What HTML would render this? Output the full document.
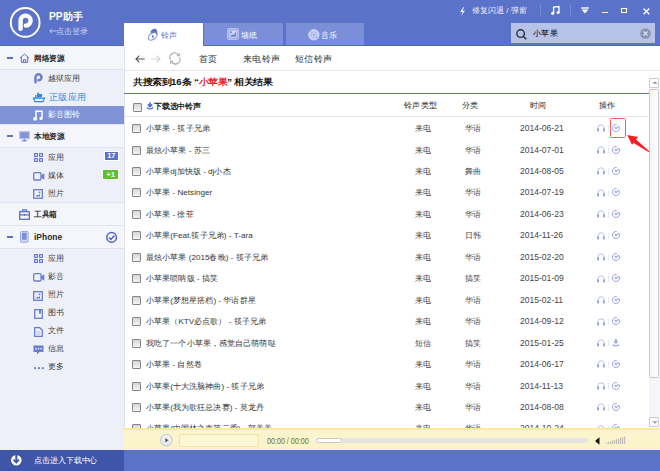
<!DOCTYPE html>
<html><head><meta charset="utf-8">
<style>
*{margin:0;padding:0;box-sizing:border-box}
html,body{width:660px;height:471px;overflow:hidden;background:#fff}
body{position:relative;font-family:"Liberation Sans",sans-serif;font-size:8px;color:#333}
.abs{position:absolute;white-space:nowrap}
svg{position:absolute;overflow:visible}
#hdr{left:0;top:0;width:660px;height:46px;background:#5a72c8}
#ppname{left:49px;top:10.5px;color:#fff;font-weight:bold;font-size:10.2px;line-height:12px}
#login{left:49px;top:25.5px;color:#c9d2f0;font-size:8px;line-height:11px}
.tab{position:absolute;top:23px;height:22px;width:79px;background:#7a8fd8;color:#fff;line-height:23px}
.tab.act{background:#fff;color:#5a72c8;height:23px}
.tab span{position:absolute;top:0.8px;font-size:8px}
#search{left:511px;top:23px;width:144px;height:20px;background:#b6c2e8}
#side{left:0;top:46px;width:124px;height:404px;background:#eef0f9}
.sec{position:absolute;left:0;width:124px;background:#f5f6fc;font-weight:bold;color:#2b2b2b;font-size:8px;border-bottom:1px solid #dfe3ef}
.sec .t{position:absolute;left:33.7px;top:0.8px;transform:scaleX(.96);transform-origin:0 0}
.item{position:absolute;left:0;width:124px;height:18px;line-height:18px;color:#3f3f3f}
.item .t{position:absolute;left:48px;top:0}
.badge{position:absolute;left:104px;width:14px;height:7.5px;top:5.5px;color:#fff;font-size:7.5px;line-height:8px;text-align:center;font-weight:bold}
.nav{top:53.5px;color:#333;font-size:10px;line-height:12px;transform:scale(.93);transform-origin:0 0}
#title{left:133px;top:77px;font-weight:bold;font-size:10px;line-height:12px;color:#111;transform:scale(.95,.86);transform-origin:0 0}
.ql{display:inline-block;width:8px;text-align:right}.qr{display:inline-block;width:7.5px;text-align:left}
.hd{top:100.4px;color:#1e1e1e;line-height:12px;font-size:9px;transform:scale(.93);transform-origin:0 0}
.row{position:absolute;left:124px;width:524px;height:21.5px}
.row span{position:absolute;top:6px;line-height:12px;white-space:nowrap;font-size:9px;transform:scale(.9);transform-origin:0 0}
.row span.c4{font-size:9.5px}
.cb{position:absolute;left:8.3px;width:9px;height:9px;border:1px solid #858585;border-radius:1px;background:linear-gradient(#d6d6d6,#f4f4f4)}
.row .cb{top:7px}
.c1{left:22px;color:#363636}
.c2{left:290.5px;color:#444}
.c3{left:340.5px;color:#444}
.c4{left:396px;color:#444}
.row svg.ic1{left:472.7px;top:7.4px}
.row svg.ic2{left:488px;top:7px}
.row i.sep{position:absolute;left:483.8px;top:8.2px;width:1px;height:6.6px;background:#e6eaf5}
#player{left:124px;top:428px;width:536px;height:22px;background:linear-gradient(#fbf5cf,#fbf4c9);border-top:2px solid #f7ec9e}
#foot{left:0;top:450px;width:660px;height:21px;background:#5a72c8}
#footl{left:0;top:450px;width:124px;height:21px;background:#3f55a8}
</style></head><body>
<div id="hdr" class="abs"></div>
<div class="abs" style="left:0;top:45px;width:660px;height:1px;background:#4f67c2"></div>
<!-- logo -->
<svg style="left:0;top:0" width="60" height="46" viewBox="0 0 60 46">
<circle cx="25.2" cy="22.4" r="14.4" fill="none" stroke="#fff" stroke-width="1.9"/>
<path d="M20.6 28.7V20.6A5 5 0 1 1 25.8 25.6" fill="none" stroke="#fff" stroke-width="4.4" stroke-linecap="round"/>
</svg>
<div id="ppname" class="abs">PP助手</div>
<svg style="left:49px;top:28px" width="8" height="6" viewBox="0 0 8 6"><path d="M7.5 3H.8M3 .8L.8 3 3 5.2" fill="none" stroke="#c9d2f0" stroke-width=".9"/></svg>
<div id="login" class="abs" style="left:56px">点击登录</div>

<div class="tab act" style="left:124px"><span style="left:37px">铃声</span></div>
<svg style="left:146px;top:28px" width="12" height="13" viewBox="0 0 12 13">
<path d="M4.3 4.6C4.8 2.6 5.8 1.2 7.6.9c1.8-.3 3 .3 3.4 1.6l.6 4.3z" fill="#5a72c8"/>
<ellipse cx="6.6" cy="8.4" rx="4.9" ry="3" transform="rotate(-35 6.6 8.4)" fill="#fff" stroke="#6a80cf" stroke-width="1"/>
<path d="M5.6 8.3l1.4-1.4 1 2-1.3 1.2z" fill="#5a72c8"/>
</svg>
<div class="tab" style="left:204.4px;width:78.6px"><span style="left:36.6px">墙纸</span></div>
<svg style="left:227.4px;top:28px" width="12" height="12" viewBox="0 0 12 12">
<rect x="0.5" y="0.5" width="11" height="11" rx="1" fill="#a2b0e8" stroke="#b6c1ee" stroke-width="1"/>
<rect x="2.3" y="2.3" width="7.4" height="7.4" fill="#ccd3f4"/>
<path d="M3 8.8l2.2-2.6 1.3 1.1 2.5-3.6v5.1z" fill="#6f84d4"/><circle cx="4" cy="4.3" r="1" fill="#6f84d4"/>
</svg>
<div class="tab" style="left:286px;width:78px"><span style="left:35.3px">音乐</span></div>
<svg style="left:307.8px;top:28.6px" width="12" height="12" viewBox="0 0 12 12">
<circle cx="5.8" cy="5.8" r="5.7" fill="#c9d1f4"/>
<circle cx="5.8" cy="5.8" r="2.8" fill="none" stroke="#a9b7ea" stroke-width="1"/>
<circle cx="5.8" cy="5.8" r="1" fill="#8196dc"/><circle cx="2.6" cy="2.7" r=".7" fill="#8196dc"/><circle cx="8.7" cy="8.6" r=".7" fill="#8196dc"/>
</svg>

<!-- header right -->
<svg style="left:459px;top:7px" width="7" height="9" viewBox="0 0 7 9">
<path d="M4.5 0L1 5h2.5L2 9l4-5.2H3.6L5.2 0z" fill="#e8ecfa"/>
</svg>
<div class="abs" style="left:472px;top:4.5px;color:#e8ecfa;line-height:12px">修复闪退 / 弹窗</div>
<div class="abs" style="left:539.8px;top:4.2px;width:1px;height:12.5px;background:#7388d2"></div>
<svg style="left:550.5px;top:6.2px" width="9" height="9" viewBox="0 0 9 9">
<path d="M2.6 7.3V1.2L8 .6v6" fill="none" stroke="#fff" stroke-width="1.3"/>
<circle cx="1.7" cy="7.3" r="1.6" fill="#fff"/><circle cx="7.1" cy="6.6" r="1.5" fill="#fff"/>
</svg>
<div class="abs" style="left:569.8px;top:4.2px;width:1px;height:12.5px;background:#7388d2"></div>
<svg style="left:581px;top:6.5px" width="8" height="7" viewBox="0 0 8 7">
<rect x="0.2" y="0.3" width="7.6" height="1.4" fill="#fff"/>
<path d="M0.6 2.6h6.8L4 6.6z" fill="#fff"/>
</svg>
<div class="abs" style="left:601.5px;top:11.6px;width:6.5px;height:1.5px;background:#fff"></div>
<div class="abs" style="left:621px;top:8.2px;width:6.3px;height:5px;border:1.6px solid #fff"></div>
<svg style="left:642.7px;top:7.6px" width="7" height="7" viewBox="0 0 7 7">
<path d="M0.5 0.5l5.8 5.8M6.3 0.5L.5 6.3" stroke="#fff" stroke-width="1.3"/>
</svg>
<div id="search" class="abs"></div>
<svg style="left:515.5px;top:28.5px" width="11" height="11" viewBox="0 0 11 11">
<circle cx="4.6" cy="4.6" r="3.8" fill="none" stroke="#2b2f3c" stroke-width="1.4"/>
<path d="M7.3 7.3l3 3" stroke="#2b2f3c" stroke-width="1.5"/>
</svg>
<div class="abs" style="left:532.8px;top:28.3px;color:#000;line-height:12px;font-size:9px;transform:scale(.92);transform-origin:0 0">小苹果</div>
<svg style="left:640px;top:28px" width="11" height="11" viewBox="0 0 11 11">
<circle cx="5.5" cy="5.5" r="5.3" fill="#8994b5"/>
<path d="M3.5 3.5l4 4M7.5 3.5l-4 4" stroke="#dfe3f0" stroke-width="1.2"/>
</svg>

<!-- sidebar -->
<div id="side" class="abs"></div>
<div class="sec" style="top:46px;height:24px;line-height:23px"><span class="t">网络资源</span></div>
<div class="abs" style="left:7px;top:56.6px;width:5.8px;height:2px;background:#5a72c8"></div>
<svg style="left:18.5px;top:53px" width="11" height="10" viewBox="0 0 11 10">
<path d="M1 5L5.5 1 10 5M2.3 4v5.3h6.4V4M4.4 9.3V6.6h2.2v2.7" fill="none" stroke="#5a72c8" stroke-width="1"/>
</svg>
<div class="item" style="top:70px"><span class="t">越狱应用</span></div>
<svg style="left:33.5px;top:73px" width="9" height="11" viewBox="0 0 9 11">
<path d="M1.5 9.2V4.2A3 3 0 1 1 4.5 7.2" fill="none" stroke="#6d80cf" stroke-width="2.5" stroke-linecap="round"/>
</svg>
<div class="item" style="top:88px;color:#2a8ae0;font-size:10px"><span class="t" style="top:1px;left:48.5px;transform:scale(.94);transform-origin:0 0">正版应用</span></div>
<svg style="left:32.5px;top:90.5px" width="12" height="12" viewBox="0 0 12 12">
<path d="M4 6.5V3.5c0-1 .8-2 1.5-2.5l.5 2h2.5c.5 0 .8.6.6 1l-.6 2.5z" fill="#2a8ae0"/>
<path d="M0.5 7.2h11l-1.5 3.5H2z" fill="none" stroke="#2a8ae0" stroke-width="1.2"/>
<rect x="2.2" y="4" width="1.3" height="3" fill="#2a8ae0"/>
</svg>
<div class="item" style="top:106px;background:#7f93d6;color:#fff"><span class="t">影音图铃</span></div>
<svg style="left:33px;top:109.5px" width="10" height="11" viewBox="0 0 10 11">
<path d="M3 8.5V1.2h6v6.5" fill="none" stroke="#fff" stroke-width="1.5"/>
<circle cx="2.1" cy="8.8" r="1.9" fill="#fff"/><circle cx="8" cy="8.4" r="1.6" fill="#fff"/>
</svg>

<div class="sec" style="top:124px;height:24px;line-height:23px;border-top:1px solid #e3e7f2"><span class="t" style="top:-0.3px">本地资源</span></div>
<div class="abs" style="left:7px;top:134.6px;width:5.8px;height:2px;background:#5a72c8"></div>
<svg style="left:18.5px;top:130.8px" width="11" height="11" viewBox="0 0 11 11">
<rect x="0.6" y="0.6" width="9.8" height="7" rx=".6" fill="#8293d8" stroke="#bcc4ec" stroke-width="1.2"/>
<path d="M2.5 9.8h6M5.5 7.6v2.2" stroke="#aab6e8" stroke-width="1.2"/><rect x="4.2" y="8.6" width="2.6" height="1.6" fill="#6a7ecf"/>
</svg>
<div class="item" style="top:148.8px"><span class="t">应用</span><span class="badge" style="background:#5a72c8;left:104.8px;top:3.4px;width:13px;height:8px;line-height:8.5px;box-shadow:0 0 0 1px #fff">17</span></div>
<svg style="left:34px;top:152.8px" width="9" height="9" viewBox="0 0 9 9">
<rect x="0.6" y="0.6" width="2.8" height="2.8" fill="none" stroke="#6a7ecf" stroke-width="1.2"/>
<rect x="5.6" y="0.6" width="2.8" height="2.8" fill="none" stroke="#6a7ecf" stroke-width="1.2"/>
<rect x="0.6" y="5.6" width="2.8" height="2.8" fill="none" stroke="#6a7ecf" stroke-width="1.2"/>
<rect x="5.6" y="5.6" width="2.8" height="2.8" fill="none" stroke="#6a7ecf" stroke-width="1.2"/>
</svg>
<div class="item" style="top:166.8px"><span class="t">媒体</span><span class="badge" style="background:#5cc22a;left:103.3px;top:3.4px;width:14.5px;height:8.8px;line-height:9px;box-shadow:0 0 0 1px #fff">+1</span></div>
<svg style="left:32.5px;top:171.8px" width="12" height="9" viewBox="0 0 12 9">
<rect x="0.7" y="0.7" width="7.3" height="7.3" rx="1" fill="none" stroke="#6a7ecf" stroke-width="1.3"/>
<path d="M8 3.5l3.3-2.3v6.5L8 5.5z" fill="#6a7ecf"/>
</svg>
<div class="item" style="top:184.8px"><span class="t">照片</span></div>
<svg style="left:33px;top:188.8px" width="10" height="10" viewBox="0 0 10 10">
<rect x="0.7" y="0.7" width="8.6" height="8.6" fill="none" stroke="#6a7ecf" stroke-width="1.3"/>
<path d="M2.5 7.5l2-2 1 1 1.5-1.8v2.8z" fill="#6a7ecf"/><circle cx="6.5" cy="3.3" r=".9" fill="#6a7ecf"/>
</svg>
<div class="sec" style="top:202px;height:24px;line-height:23px;border-top:1px solid #e3e7f2"><span class="t" style="top:-0.3px">工具箱</span></div>
<svg style="left:18.5px;top:209px" width="11" height="11" viewBox="0 0 11 11">
<rect x="0.7" y="2.7" width="9.6" height="7.6" fill="none" stroke="#5a72c8" stroke-width="1.3"/>
<path d="M3.5 2.7V.8h4v1.9M0.7 5.8h9.6M5.5 5v2" stroke="#5a72c8" stroke-width="1.2" fill="none"/>
</svg>
<div class="sec" style="top:225.5px;height:23.5px;line-height:23px;font-size:8.8px"><span class="t">iPhone</span></div>
<div class="abs" style="left:7px;top:235.6px;width:5.8px;height:2px;background:#5a72c8"></div>
<svg style="left:19.7px;top:231px" width="9" height="12" viewBox="0 0 9 12">
<rect x="0.5" y="0.5" width="7.6" height="10.8" rx="1" fill="#d3d9f4" stroke="#9aa8e0" stroke-width="1"/>
<rect x="2" y="1.8" width="4.6" height="7" fill="#7d8fd8"/>
</svg>
<svg style="left:106px;top:232px" width="12" height="11" viewBox="0 0 12 11">
<circle cx="5.6" cy="5.4" r="4.8" fill="none" stroke="#4b62c2" stroke-width="1.5"/>
<path d="M3 5.5l1.9 1.9 3.5-3.8" fill="none" stroke="#4b62c2" stroke-width="1.5"/>
</svg>
<div class="item" style="top:250.2px"><span class="t">应用</span></div>
<svg style="left:34px;top:254.2px" width="9" height="9" viewBox="0 0 9 9">
<rect x="0.6" y="0.6" width="2.8" height="2.8" fill="none" stroke="#6a7ecf" stroke-width="1.2"/>
<rect x="5.6" y="0.6" width="2.8" height="2.8" fill="none" stroke="#6a7ecf" stroke-width="1.2"/>
<rect x="0.6" y="5.6" width="2.8" height="2.8" fill="none" stroke="#6a7ecf" stroke-width="1.2"/>
<rect x="5.6" y="5.6" width="2.8" height="2.8" fill="none" stroke="#6a7ecf" stroke-width="1.2"/>
</svg>
<div class="item" style="top:268.2px"><span class="t">影音</span></div>
<svg style="left:32.5px;top:273.2px" width="12" height="9" viewBox="0 0 12 9">
<rect x="0.7" y="0.7" width="7.3" height="7.3" rx="1" fill="none" stroke="#6a7ecf" stroke-width="1.3"/>
<path d="M8 3.5l3.3-2.3v6.5L8 5.5z" fill="#6a7ecf"/>
</svg>
<div class="item" style="top:286.2px"><span class="t">照片</span></div>
<svg style="left:33px;top:290.7px" width="10" height="10" viewBox="0 0 10 10">
<rect x="0.7" y="0.7" width="8.6" height="8.6" fill="none" stroke="#6a7ecf" stroke-width="1.3"/>
<path d="M2.5 7.5l2-2 1 1 1.5-1.8v2.8z" fill="#6a7ecf"/><circle cx="6.5" cy="3.3" r=".9" fill="#6a7ecf"/>
</svg>
<div class="item" style="top:304.2px"><span class="t">图书</span></div>
<svg style="left:34px;top:308.7px" width="9" height="10" viewBox="0 0 9 10">
<rect x="0.7" y="0.7" width="7.6" height="8.6" fill="none" stroke="#6a7ecf" stroke-width="1.3"/>
<path d="M5 1v4l1-1 1 1V1" fill="#6a7ecf"/>
</svg>
<div class="item" style="top:322.2px"><span class="t">文件</span></div>
<svg style="left:34px;top:326.7px" width="9" height="10" viewBox="0 0 9 10">
<path d="M0.7 0.7h5l2.6 2.6v6H0.7z" fill="none" stroke="#6a7ecf" stroke-width="1.3"/>
<path d="M2.5 5h4M2.5 7h4" stroke="#a9b5e4" stroke-width=".8"/>
</svg>
<div class="item" style="top:340.2px"><span class="t">信息</span></div>
<svg style="left:33px;top:344.7px" width="11" height="10" viewBox="0 0 11 10">
<path d="M0.5 0.5h10v6.5H6.5L4 9.5V7H0.5z" fill="#6a7ecf"/>
<circle cx="3" cy="3.8" r=".8" fill="#fff"/><circle cx="5.5" cy="3.8" r=".8" fill="#fff"/><circle cx="8" cy="3.8" r=".8" fill="#fff"/>
</svg>
<div class="item" style="top:358.2px"><span class="t">更多</span></div>
<svg style="left:33.5px;top:366.7px" width="10" height="3" viewBox="0 0 10 3">
<circle cx="1.2" cy="1.2" r="1.1" fill="#6a7ecf"/><circle cx="5" cy="1.2" r="1.1" fill="#6a7ecf"/><circle cx="8.8" cy="1.2" r="1.1" fill="#6a7ecf"/>
</svg>

<!-- main -->
<div class="abs" style="left:124px;top:46px;width:1px;height:382px;background:#e2e4ec"></div>
<svg style="left:134.5px;top:55px" width="10" height="8" viewBox="0 0 10 8">
<path d="M9.7 4H1M4.3.6L.9 4l3.4 3.4" fill="none" stroke="#555" stroke-width="1.1"/>
</svg>
<svg style="left:150.5px;top:55px" width="10" height="8" viewBox="0 0 10 8">
<path d="M0.3 4H9M5.7.6L9.1 4 5.7 7.4" fill="none" stroke="#d0d0d0" stroke-width="1.1"/>
</svg>
<svg style="left:168.5px;top:53px" width="12" height="11" viewBox="0 0 12 11">
<path d="M1.5 6.5A4.4 4.4 0 0 1 9.3 2.2M10.5 4.5A4.4 4.4 0 0 1 2.7 8.8" fill="none" stroke="#a5a5a5" stroke-width="1.2"/>
<path d="M7.8 2.8h2.5V.3M4.2 8.2H1.7v2.5" fill="none" stroke="#a5a5a5" stroke-width="1.1"/>
</svg>
<div class="abs nav" style="left:199px">首页</div>
<div class="abs nav" style="left:243px">来电铃声</div>
<div class="abs nav" style="left:295px">短信铃声</div>
<div class="abs" style="left:125px;top:70px;width:535px;height:1px;background:#e4e6ee"></div>
<div id="title" class="abs">共搜索到16条<span class="ql">“</span><span style="color:#e8202a">小苹果</span><span class="qr">”</span>相关结果</div>
<div class="abs" style="left:124.3px;top:92.6px;width:524.7px;height:1.7px;background:#5a72c8"></div>

<span class="cb" style="left:132.6px;top:102.5px"></span>
<svg style="left:146px;top:102px" width="8" height="8" viewBox="0 0 8 8">
<path d="M4 0.3v3.6M1.8 2.4L4 4.6l2.2-2.2" fill="none" stroke="#4a6ad8" stroke-width="1.5"/>
<path d="M0.8 5.5q3.2 3 6.4 0" fill="none" stroke="#4a6ad8" stroke-width="1.1"/>
</svg>
<div class="abs hd" style="left:153.5px;top:101px;font-weight:bold;color:#222;transform:scale(.87)">下载选中铃声</div>
<div class="abs hd" style="left:404px">铃声类型</div>
<div class="abs hd" style="left:461.5px">分类</div>
<div class="abs hd" style="left:530.2px">时间</div>
<div class="abs hd" style="left:598.5px">操作</div>
<div class="abs" style="left:125px;top:116px;width:523px;height:1px;background:#e6e8ef"></div>
<div class="row" style="top:117.1px"><i class="cb"></i><span class="c1">小苹果 - 筷子兄弟</span><span class="c2">来电</span><span class="c3">华语</span><span class="c4">2014-06-21</span><svg class="ic1" width="8" height="8" viewBox="0 0 8 8"><path d="M0.9 5.2V3.9a3.1 3.1 0 0 1 6.2 0V5.2" stroke="#b2bbe6" stroke-width=".9" fill="none"/><rect x="0.2" y="4.2" width="1.8" height="3.4" rx=".8" fill="#8e9cd6"/><rect x="6" y="4.2" width="1.8" height="3.4" rx=".8" fill="#8e9cd6"/></svg><i class="sep"></i><svg class="ic2" width="8" height="8" viewBox="0 0 8 8"><path d="M7.2 2.6A3.5 3.5 0 1 1 4.8 0.6" stroke="#96a3dc" stroke-width="1" fill="none"/><path d="M2.9 2.9L4 4.7l2.6-2.6" stroke="#96a3dc" stroke-width="1.1" fill="none"/></svg></div>
<div class="row" style="top:138.55px"><i class="cb"></i><span class="c1">最炫小苹果 - 苏三</span><span class="c2">来电</span><span class="c3">华语</span><span class="c4">2014-07-01</span><svg class="ic1" width="8" height="8" viewBox="0 0 8 8"><path d="M0.9 5.2V3.9a3.1 3.1 0 0 1 6.2 0V5.2" stroke="#b2bbe6" stroke-width=".9" fill="none"/><rect x="0.2" y="4.2" width="1.8" height="3.4" rx=".8" fill="#8e9cd6"/><rect x="6" y="4.2" width="1.8" height="3.4" rx=".8" fill="#8e9cd6"/></svg><i class="sep"></i><svg class="ic2" width="8" height="8" viewBox="0 0 8 8"><path d="M7.2 2.6A3.5 3.5 0 1 1 4.8 0.6" stroke="#96a3dc" stroke-width="1" fill="none"/><path d="M2.9 2.9L4 4.7l2.6-2.6" stroke="#96a3dc" stroke-width="1.1" fill="none"/></svg></div>
<div class="row" style="top:160.0px"><i class="cb"></i><span class="c1">小苹果dj加快版 - dj小杰</span><span class="c2">来电</span><span class="c3">舞曲</span><span class="c4">2014-08-05</span><svg class="ic1" width="8" height="8" viewBox="0 0 8 8"><path d="M0.9 5.2V3.9a3.1 3.1 0 0 1 6.2 0V5.2" stroke="#b2bbe6" stroke-width=".9" fill="none"/><rect x="0.2" y="4.2" width="1.8" height="3.4" rx=".8" fill="#8e9cd6"/><rect x="6" y="4.2" width="1.8" height="3.4" rx=".8" fill="#8e9cd6"/></svg><i class="sep"></i><svg class="ic2" width="8" height="8" viewBox="0 0 8 8"><path d="M7.2 2.6A3.5 3.5 0 1 1 4.8 0.6" stroke="#96a3dc" stroke-width="1" fill="none"/><path d="M2.9 2.9L4 4.7l2.6-2.6" stroke="#96a3dc" stroke-width="1.1" fill="none"/></svg></div>
<div class="row" style="top:181.45px"><i class="cb"></i><span class="c1">小苹果 - Netsinger</span><span class="c2">来电</span><span class="c3">华语</span><span class="c4">2014-07-19</span><svg class="ic1" width="8" height="8" viewBox="0 0 8 8"><path d="M0.9 5.2V3.9a3.1 3.1 0 0 1 6.2 0V5.2" stroke="#b2bbe6" stroke-width=".9" fill="none"/><rect x="0.2" y="4.2" width="1.8" height="3.4" rx=".8" fill="#8e9cd6"/><rect x="6" y="4.2" width="1.8" height="3.4" rx=".8" fill="#8e9cd6"/></svg><i class="sep"></i><svg class="ic2" width="8" height="8" viewBox="0 0 8 8"><path d="M7.2 2.6A3.5 3.5 0 1 1 4.8 0.6" stroke="#96a3dc" stroke-width="1" fill="none"/><path d="M2.9 2.9L4 4.7l2.6-2.6" stroke="#96a3dc" stroke-width="1.1" fill="none"/></svg></div>
<div class="row" style="top:202.9px"><i class="cb"></i><span class="c1">小苹果 - 徐菲</span><span class="c2">来电</span><span class="c3">华语</span><span class="c4">2014-06-23</span><svg class="ic1" width="8" height="8" viewBox="0 0 8 8"><path d="M0.9 5.2V3.9a3.1 3.1 0 0 1 6.2 0V5.2" stroke="#b2bbe6" stroke-width=".9" fill="none"/><rect x="0.2" y="4.2" width="1.8" height="3.4" rx=".8" fill="#8e9cd6"/><rect x="6" y="4.2" width="1.8" height="3.4" rx=".8" fill="#8e9cd6"/></svg><i class="sep"></i><svg class="ic2" width="8" height="8" viewBox="0 0 8 8"><path d="M7.2 2.6A3.5 3.5 0 1 1 4.8 0.6" stroke="#96a3dc" stroke-width="1" fill="none"/><path d="M2.9 2.9L4 4.7l2.6-2.6" stroke="#96a3dc" stroke-width="1.1" fill="none"/></svg></div>
<div class="row" style="top:224.35px"><i class="cb"></i><span class="c1">小苹果(Feat.筷子兄弟) - T-ara</span><span class="c2">来电</span><span class="c3">日韩</span><span class="c4">2014-11-26</span><svg class="ic1" width="8" height="8" viewBox="0 0 8 8"><path d="M0.9 5.2V3.9a3.1 3.1 0 0 1 6.2 0V5.2" stroke="#b2bbe6" stroke-width=".9" fill="none"/><rect x="0.2" y="4.2" width="1.8" height="3.4" rx=".8" fill="#8e9cd6"/><rect x="6" y="4.2" width="1.8" height="3.4" rx=".8" fill="#8e9cd6"/></svg><i class="sep"></i><svg class="ic2" width="8" height="8" viewBox="0 0 8 8"><path d="M7.2 2.6A3.5 3.5 0 1 1 4.8 0.6" stroke="#96a3dc" stroke-width="1" fill="none"/><path d="M2.9 2.9L4 4.7l2.6-2.6" stroke="#96a3dc" stroke-width="1.1" fill="none"/></svg></div>
<div class="row" style="top:245.8px"><i class="cb"></i><span class="c1">最炫小苹果 (2015春晚) - 筷子兄弟</span><span class="c2">来电</span><span class="c3">华语</span><span class="c4">2015-02-20</span><svg class="ic1" width="8" height="8" viewBox="0 0 8 8"><path d="M0.9 5.2V3.9a3.1 3.1 0 0 1 6.2 0V5.2" stroke="#b2bbe6" stroke-width=".9" fill="none"/><rect x="0.2" y="4.2" width="1.8" height="3.4" rx=".8" fill="#8e9cd6"/><rect x="6" y="4.2" width="1.8" height="3.4" rx=".8" fill="#8e9cd6"/></svg><i class="sep"></i><svg class="ic2" width="8" height="8" viewBox="0 0 8 8"><path d="M7.2 2.6A3.5 3.5 0 1 1 4.8 0.6" stroke="#96a3dc" stroke-width="1" fill="none"/><path d="M2.9 2.9L4 4.7l2.6-2.6" stroke="#96a3dc" stroke-width="1.1" fill="none"/></svg></div>
<div class="row" style="top:267.25px"><i class="cb"></i><span class="c1">小苹果唢呐版 - 搞笑</span><span class="c2">来电</span><span class="c3">搞笑</span><span class="c4">2015-01-09</span><svg class="ic1" width="8" height="8" viewBox="0 0 8 8"><path d="M0.9 5.2V3.9a3.1 3.1 0 0 1 6.2 0V5.2" stroke="#b2bbe6" stroke-width=".9" fill="none"/><rect x="0.2" y="4.2" width="1.8" height="3.4" rx=".8" fill="#8e9cd6"/><rect x="6" y="4.2" width="1.8" height="3.4" rx=".8" fill="#8e9cd6"/></svg><i class="sep"></i><svg class="ic2" width="8" height="8" viewBox="0 0 8 8"><path d="M7.2 2.6A3.5 3.5 0 1 1 4.8 0.6" stroke="#96a3dc" stroke-width="1" fill="none"/><path d="M2.9 2.9L4 4.7l2.6-2.6" stroke="#96a3dc" stroke-width="1.1" fill="none"/></svg></div>
<div class="row" style="top:288.7px"><i class="cb"></i><span class="c1">小苹果(梦想星搭档) - 华语群星</span><span class="c2">来电</span><span class="c3">华语</span><span class="c4">2015-02-11</span><svg class="ic1" width="8" height="8" viewBox="0 0 8 8"><path d="M0.9 5.2V3.9a3.1 3.1 0 0 1 6.2 0V5.2" stroke="#b2bbe6" stroke-width=".9" fill="none"/><rect x="0.2" y="4.2" width="1.8" height="3.4" rx=".8" fill="#8e9cd6"/><rect x="6" y="4.2" width="1.8" height="3.4" rx=".8" fill="#8e9cd6"/></svg><i class="sep"></i><svg class="ic2" width="8" height="8" viewBox="0 0 8 8"><path d="M7.2 2.6A3.5 3.5 0 1 1 4.8 0.6" stroke="#96a3dc" stroke-width="1" fill="none"/><path d="M2.9 2.9L4 4.7l2.6-2.6" stroke="#96a3dc" stroke-width="1.1" fill="none"/></svg></div>
<div class="row" style="top:310.15px"><i class="cb"></i><span class="c1">小苹果（KTV必点歌） - 筷子兄弟</span><span class="c2">来电</span><span class="c3">华语</span><span class="c4">2014-09-12</span><svg class="ic1" width="8" height="8" viewBox="0 0 8 8"><path d="M0.9 5.2V3.9a3.1 3.1 0 0 1 6.2 0V5.2" stroke="#b2bbe6" stroke-width=".9" fill="none"/><rect x="0.2" y="4.2" width="1.8" height="3.4" rx=".8" fill="#8e9cd6"/><rect x="6" y="4.2" width="1.8" height="3.4" rx=".8" fill="#8e9cd6"/></svg><i class="sep"></i><svg class="ic2" width="8" height="8" viewBox="0 0 8 8"><path d="M7.2 2.6A3.5 3.5 0 1 1 4.8 0.6" stroke="#96a3dc" stroke-width="1" fill="none"/><path d="M2.9 2.9L4 4.7l2.6-2.6" stroke="#96a3dc" stroke-width="1.1" fill="none"/></svg></div>
<div class="row" style="top:331.6px"><i class="cb"></i><span class="c1">我吃了一个小苹果，感觉自己萌萌哒</span><span class="c2">短信</span><span class="c3">搞笑</span><span class="c4">2015-01-25</span><svg class="ic1" width="8" height="8" viewBox="0 0 8 8"><path d="M0.9 5.2V3.9a3.1 3.1 0 0 1 6.2 0V5.2" stroke="#b2bbe6" stroke-width=".9" fill="none"/><rect x="0.2" y="4.2" width="1.8" height="3.4" rx=".8" fill="#8e9cd6"/><rect x="6" y="4.2" width="1.8" height="3.4" rx=".8" fill="#8e9cd6"/></svg><i class="sep"></i><svg class="ic2" width="8" height="8" viewBox="0 0 8 8"><path d="M3.9 0v2.6" stroke="#96a3dc" stroke-width="1.8" fill="none"/><path d="M1.3 2.2h5.2L3.9 4.9z" fill="#96a3dc"/><path d="M0.8 5.8q3.1 2.4 6.2 0" stroke="#96a3dc" stroke-width="1.1" fill="none"/></svg></div>
<div class="row" style="top:353.05px"><i class="cb"></i><span class="c1">小苹果 - 自然卷</span><span class="c2">来电</span><span class="c3">华语</span><span class="c4">2014-06-17</span><svg class="ic1" width="8" height="8" viewBox="0 0 8 8"><path d="M0.9 5.2V3.9a3.1 3.1 0 0 1 6.2 0V5.2" stroke="#b2bbe6" stroke-width=".9" fill="none"/><rect x="0.2" y="4.2" width="1.8" height="3.4" rx=".8" fill="#8e9cd6"/><rect x="6" y="4.2" width="1.8" height="3.4" rx=".8" fill="#8e9cd6"/></svg><i class="sep"></i><svg class="ic2" width="8" height="8" viewBox="0 0 8 8"><path d="M7.2 2.6A3.5 3.5 0 1 1 4.8 0.6" stroke="#96a3dc" stroke-width="1" fill="none"/><path d="M2.9 2.9L4 4.7l2.6-2.6" stroke="#96a3dc" stroke-width="1.1" fill="none"/></svg></div>
<div class="row" style="top:374.5px"><i class="cb"></i><span class="c1">小苹果(十大洗脑神曲) - 筷子兄弟</span><span class="c2">来电</span><span class="c3">华语</span><span class="c4">2014-11-13</span><svg class="ic1" width="8" height="8" viewBox="0 0 8 8"><path d="M0.9 5.2V3.9a3.1 3.1 0 0 1 6.2 0V5.2" stroke="#b2bbe6" stroke-width=".9" fill="none"/><rect x="0.2" y="4.2" width="1.8" height="3.4" rx=".8" fill="#8e9cd6"/><rect x="6" y="4.2" width="1.8" height="3.4" rx=".8" fill="#8e9cd6"/></svg><i class="sep"></i><svg class="ic2" width="8" height="8" viewBox="0 0 8 8"><path d="M7.2 2.6A3.5 3.5 0 1 1 4.8 0.6" stroke="#96a3dc" stroke-width="1" fill="none"/><path d="M2.9 2.9L4 4.7l2.6-2.6" stroke="#96a3dc" stroke-width="1.1" fill="none"/></svg></div>
<div class="row" style="top:395.95px"><i class="cb"></i><span class="c1">小苹果(我为歌狂总决赛) - 莫龙丹</span><span class="c2">来电</span><span class="c3">华语</span><span class="c4">2014-08-08</span><svg class="ic1" width="8" height="8" viewBox="0 0 8 8"><path d="M0.9 5.2V3.9a3.1 3.1 0 0 1 6.2 0V5.2" stroke="#b2bbe6" stroke-width=".9" fill="none"/><rect x="0.2" y="4.2" width="1.8" height="3.4" rx=".8" fill="#8e9cd6"/><rect x="6" y="4.2" width="1.8" height="3.4" rx=".8" fill="#8e9cd6"/></svg><i class="sep"></i><svg class="ic2" width="8" height="8" viewBox="0 0 8 8"><path d="M7.2 2.6A3.5 3.5 0 1 1 4.8 0.6" stroke="#96a3dc" stroke-width="1" fill="none"/><path d="M2.9 2.9L4 4.7l2.6-2.6" stroke="#96a3dc" stroke-width="1.1" fill="none"/></svg></div>
<div class="row" style="top:417.4px"><i class="cb"></i><span class="c1">小苹果(中国林之声第二季) - 郭美美</span><span class="c2">来电</span><span class="c3">华语</span><span class="c4">2014-10-24</span><svg class="ic1" width="8" height="8" viewBox="0 0 8 8"><path d="M0.9 5.2V3.9a3.1 3.1 0 0 1 6.2 0V5.2" stroke="#b2bbe6" stroke-width=".9" fill="none"/><rect x="0.2" y="4.2" width="1.8" height="3.4" rx=".8" fill="#8e9cd6"/><rect x="6" y="4.2" width="1.8" height="3.4" rx=".8" fill="#8e9cd6"/></svg><i class="sep"></i><svg class="ic2" width="8" height="8" viewBox="0 0 8 8"><path d="M7.2 2.6A3.5 3.5 0 1 1 4.8 0.6" stroke="#96a3dc" stroke-width="1" fill="none"/><path d="M2.9 2.9L4 4.7l2.6-2.6" stroke="#96a3dc" stroke-width="1.1" fill="none"/></svg></div>
<!-- red box & arrow -->
<div class="abs" style="left:609.6px;top:117.6px;width:16.4px;height:20.2px;border:1px solid #f45c5c;border-radius:1.5px"></div>
<svg style="left:620px;top:130px" width="40" height="30" viewBox="0 0 40 30">
<path d="M7.2 5L18.2 7.1 16 9.6 29.9 21.8 29.3 22.5 13.6 12.9 12 14.8z" fill="#fa1e24"/>
</svg>

<!-- scrollbar -->
<div class="abs" style="left:649px;top:88px;width:11px;height:329px;background:#f6f6fa"></div>
<div class="abs" style="left:649.2px;top:77.5px;width:10px;height:10px;border:1px solid #cacacf;background:#fdfdfd;border-radius:1px"></div>
<svg style="left:651.5px;top:81px" width="6" height="3" viewBox="0 0 6 3"><path d="M0.3 2.8L3 .2l2.7 2.6z" fill="#9a9aa4"/></svg>
<div class="abs" style="left:649.2px;top:88.8px;width:10px;height:289.7px;border:1px solid #c8c8ce;background:linear-gradient(90deg,#f4f4f4,#fff);border-radius:1.5px"></div>
<div class="abs" style="left:649.2px;top:417px;width:10px;height:9.8px;border:1px solid #cacacf;background:#fdfdfd;border-radius:1px"></div>
<svg style="left:651.5px;top:420.8px" width="6" height="3" viewBox="0 0 6 3"><path d="M0.3 .2L3 2.8 5.7 .2z" fill="#9a9aa4"/></svg>

<!-- player -->
<div id="player" class="abs"></div>
<svg style="left:159.8px;top:434px" width="14" height="14" viewBox="0 0 14 14">
<defs><linearGradient id="pg" x1="0" y1="0" x2="0" y2="1"><stop offset="0" stop-color="#f6f6f8"/><stop offset="1" stop-color="#e4e6ee"/></linearGradient></defs>
<circle cx="6.4" cy="6.2" r="5.8" fill="url(#pg)" stroke="#c2c4cc" stroke-width="1"/>
<path d="M5.3 3.9v4.6l3.2-2.3z" fill="#5a5a5a"/>
</svg>
<div class="abs" style="left:178.5px;top:433.5px;width:80.5px;height:13px;border:1px solid #efe3a8;background:#fdf7d6;border-radius:2px"></div>
<div class="abs" style="left:266.5px;top:434.5px;color:#74701a;line-height:12px;font-size:8.5px;transform:scaleX(.84);transform-origin:0 0">00:00 / 00:00</div>
<div class="abs" style="left:315.5px;top:437.8px;width:272.5px;height:5.5px;background:#e6e5df;border-radius:3px"></div>
<div class="abs" style="left:315.5px;top:437.8px;width:26px;height:5.5px;background:#fff;border:1px solid #c8c8c8;border-radius:3px"></div>
<svg style="left:595px;top:437px" width="5" height="8" viewBox="0 0 5 8"><path d="M4.5 0.3v7.4L0.5 4.5V3.5z" fill="#111"/></svg>
<svg style="left:606px;top:435.5px" width="20" height="8" viewBox="0 0 20 8">
<path d="M0.6 8V6.6M2.6 8V6M4.6 8V5.3M6.6 8V4.6M8.6 8V3.9M10.6 8V3.2M12.6 8V2.5M14.6 8V1.8M16.6 8V1.1M18.6 8V.4" stroke="#bdbdb2" stroke-width="1.2"/>
</svg>

<!-- footer -->
<div id="foot" class="abs"></div>
<div id="footl" class="abs"></div>
<svg style="left:10.9px;top:455.2px" width="11" height="11" viewBox="0 0 11 11">
<circle cx="5.3" cy="5.3" r="5.3" fill="#fff"/>
<path d="M5.3 -0.5V6.4" stroke="#3f55a8" stroke-width="2"/>
<path d="M2.6 4.6l2.7 2.8 2.7-2.8" fill="none" stroke="#3f55a8" stroke-width="1.8"/>
</svg>
<div class="abs" style="left:33.5px;top:454.5px;color:#fff;line-height:12px;font-size:9px;transform:scale(.88);transform-origin:0 0">点击进入下载中心</div>
</body></html>
